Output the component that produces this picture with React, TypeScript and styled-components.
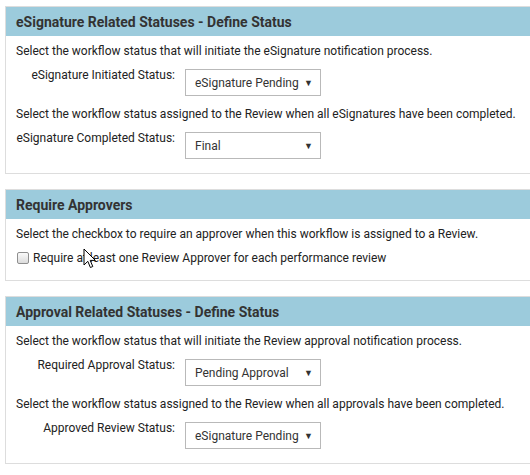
import React from 'react';
import styled, { createGlobalStyle } from 'styled-components';

type FieldProps = {
  label: string;
  value: string;
};

const GlobalStyle = createGlobalStyle`
  html, body {
    margin: 0;
    padding: 0;
    background: #ffffff;
    overflow: hidden;
  }
  body {
    font-family: Roboto, "Liberation Sans", Arial, sans-serif;
    color: #222222;
  }
`;

function Field({ label, value }: FieldProps) {
  return (
    <FieldRow>
      <Label>{label}</Label>
      <SelectBox>
        <span>{value}</span>
        <Arrow>▼</Arrow>
      </SelectBox>
    </FieldRow>
  );
}

function Cursor() {
  return (
    <CursorWrapper>
      <svg width="14" height="21" viewBox="0 0 14 21">
        <path
          d="M1 1 L1 17 L4.8 13.3 L7.4 19.5 L9.8 18.5 L7.2 12.4 L12.4 12.4 Z"
          fill="#ffffff"
          stroke="#000000"
          strokeWidth="1"
          strokeLinejoin="round"
        />
      </svg>
    </CursorWrapper>
  );
}

function App() {
  return (
    <>
      <GlobalStyle />
      <Page>
        <Panel>
          <Header>eSignature Related Statuses - Define Status</Header>
          <Body>
            <Description>Select the workflow status that will initiate the eSignature notification process.</Description>
            <Field label="eSignature Initiated Status:" value="eSignature Pending" />
            <Description $gap={10}>
              Select the workflow status assigned to the Review when all eSignatures have been completed.
            </Description>
            <Field label="eSignature Completed Status:" value="Final" />
          </Body>
        </Panel>

        <Panel>
          <Header>Require Approvers</Header>
          <Body>
            <Description>Select the checkbox to require an approver when this workflow is assigned to a Review.</Description>
            <CheckRow>
              <CheckBox />
              <span>Require at least one Review Approver for each performance review</span>
              <Cursor />
            </CheckRow>
          </Body>
        </Panel>

        <Panel>
          <Header>Approval Related Statuses - Define Status</Header>
          <Body>
            <Description>Select the workflow status that will initiate the Review approval notification process.</Description>
            <Field label="Required Approval Status:" value="Pending Approval" />
            <Description $gap={10}>
              Select the workflow status assigned to the Review when all approvals have been completed.
            </Description>
            <Field label="Approved Review Status:" value="eSignature Pending" />
          </Body>
        </Panel>
      </Page>
    </>
  );
}

const Page = styled.div`
  display: flex;
  flex-direction: column;
  gap: 15px;
  width: 545px;
  padding: 6px 0 0 5px;
`;

const Panel = styled.section`
  border: 1px solid #dddddd;
  background: #ffffff;
`;

const Header = styled.div`
  display: flex;
  align-items: center;
  height: 29px;
  padding: 0 10px;
  background: #9ccbdc;
  color: #333333;
  font-size: 14px;
  font-weight: 700;
`;

const Body = styled.div`
  display: flex;
  flex-direction: column;
  padding: 7px 10px 14px 10px;
`;

const Description = styled.div<{ $gap?: number }>`
  margin-top: ${(p) => p.$gap ?? 0}px;
  font-size: 12px;
  line-height: 16px;
  color: #222222;
  white-space: nowrap;
`;

const FieldRow = styled.div`
  display: grid;
  grid-template-columns: 159px 136px;
  column-gap: 10px;
  align-items: start;
  margin-top: 10px;
`;

const Label = styled.div`
  text-align: right;
  font-size: 12px;
  line-height: 13px;
  color: #222222;
  white-space: nowrap;
`;

const SelectBox = styled.div`
  display: flex;
  align-items: center;
  justify-content: space-between;
  box-sizing: border-box;
  height: 27px;
  padding: 0 7px 0 9px;
  border: 1px solid #b9b9b9;
  background: #ffffff;
  font-size: 12px;
  color: #333333;
  white-space: nowrap;
`;

const Arrow = styled.span`
  font-size: 9px;
  color: #333333;
`;

const CheckRow = styled.label`
  position: relative;
  display: flex;
  align-items: center;
  gap: 4px;
  margin-top: 8px;
  font-size: 12px;
  line-height: 16px;
  color: #222222;
  white-space: nowrap;
`;

const CheckBox = styled.span`
  display: inline-block;
  box-sizing: border-box;
  width: 12px;
  height: 12px;
  margin-left: 1px;
  border: 1px solid #8f8f8f;
  border-radius: 2px;
  background: linear-gradient(#fafafa, #dcdcdc);
`;

const CursorWrapper = styled.div`
  position: absolute;
  left: 67px;
  top: -2px;
  pointer-events: none;

  svg {
    display: block;
  }
`;

export default App;
